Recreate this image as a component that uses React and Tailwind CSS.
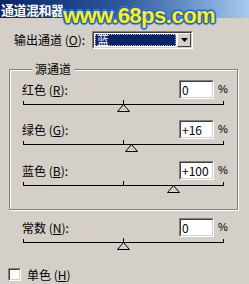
import React from "react";

const font = { fontFamily: '"Noto Sans CJK SC", "Noto Sans", sans-serif' };

function Sunken({ value, className = "" }) {
  return (
    <div className={"border border-t-[#808080] border-l-[#808080] border-b-white border-r-white " + className}>
      <div className="border border-t-[#404040] border-l-[#404040] border-b-[#d4d0c8] border-r-[#d4d0c8] bg-white h-full flex items-center pl-[1px] text-[12px] leading-none text-black">
        {value}
      </div>
    </div>
  );
}

function Slider({ pos }) {
  return (
    <div className="relative h-[9px] w-[201px]">
      <div className="absolute left-0 right-0 top-[3px] h-px bg-black" />
      <div className="absolute left-0 top-0 h-[4px] w-px bg-black" />
      <div className="absolute right-0 top-0 h-[4px] w-px bg-black" />
      <div className="absolute left-[100px] top-[-1px] h-[5px] w-px bg-black" />
      <svg className="absolute top-[3px]" style={{ left: pos - 6 }} width="13" height="8" viewBox="0 0 13 8">
        <polygon points="6.5,0.5 0.5,7.5 12.5,7.5" fill="#d4d0c8" stroke="#000" strokeWidth="1" />
      </svg>
    </div>
  );
}

function Row({ label, letter, value, pos, mt }) {
  return (
    <div className={mt}>
      <div className="flex items-center h-[19px]">
        <span className="w-[157px] text-[12px] leading-none pt-[1px]">
          {label} (<u>{letter}</u>):
        </span>
        <Sunken value={value} className="w-[35px] h-[19px]" />
        <span className="ml-[4px] text-[11px] leading-none" style={{ fontFamily: '"Liberation Sans", sans-serif' }}>%</span>
      </div>
      <div className="mt-[2px] ml-[1px]">
        <Slider pos={pos} />
      </div>
    </div>
  );
}

export default function App() {
  return (
    <div className="relative w-[249px] h-[284px] bg-[#d4d0c8] overflow-hidden text-black" style={font}>
      <div className="h-[18px] bg-gradient-to-r from-[#0a246a] via-[#2d5a9c] to-[#a6caf0] flex items-center pl-[1px]">
        <span className="text-white font-bold text-[13px] leading-none tracking-[-0.5px]">通道混和器</span>
      </div>

      <div className="flex items-center mt-[13px] ml-[14px] h-[18px]">
        <span className="w-[78px] text-[12px] leading-none">
          输出通道 (<u>O</u>):
        </span>
        <div className="w-[101px] h-[18px] border border-t-[#808080] border-l-[#808080] border-b-white border-r-white">
          <div className="h-full flex border border-t-[#404040] border-l-[#404040] border-b-[#d4d0c8] border-r-[#d4d0c8] bg-white">
            <div className="flex-1 m-[1px] bg-[#0a246a] border border-dotted border-[#c0c0c0] flex items-center pl-[1px]">
              <span className="text-white text-[12px] leading-none">蓝</span>
            </div>
            <div className="w-[14px] h-full bg-[#d4d0c8] border border-t-white border-l-white border-b-[#404040] border-r-[#404040] flex items-center justify-center">
              <svg width="7" height="4" viewBox="0 0 7 4"><polygon points="0,0 7,0 3.5,4" fill="#000" /></svg>
            </div>
          </div>
        </div>
      </div>

      <fieldset className="ml-[9px] mt-[14px] w-[229px] h-[147px] border border-[#808080] shadow-[inset_1px_1px_0_#fff,1px_1px_0_#fff] pl-[12px]">
        <legend className="ml-[10px] px-[3px] text-[12px] leading-none bg-[#d4d0c8]">源通道</legend>
        <Row label="红色" letter="R" value="0" pos={100} mt="mt-[5px]" />
        <Row label="绿色" letter="G" value="+16" pos={108} mt="mt-[10px]" />
        <Row label="蓝色" letter="B" value="+100" pos={150} mt="mt-[11px]" />
      </fieldset>

      <div className="ml-[22px] mt-[8px]">
        <Row label="常数" letter="N" value="0" pos={100} mt="mt-0" />
      </div>

      <div className="flex items-center ml-[8px] mt-[20px]">
        <div className="w-[13px] h-[13px] border border-t-[#808080] border-l-[#808080] border-b-white border-r-white">
          <div className="w-full h-full border border-t-[#404040] border-l-[#404040] border-b-[#d4d0c8] border-r-[#d4d0c8] bg-white" />
        </div>
        <span className="ml-[6px] text-[12px] leading-none">
          单色 (<u>H</u>)
        </span>
      </div>

      <div
        className="absolute left-[63px] top-[5px] text-[22px] font-bold text-[#fff200] tracking-[-0.5px] leading-none"
        style={{
          fontFamily: '"Liberation Sans", Arial, sans-serif',
          textShadow:
            "1px 0 0 #1e5fd8, -1px 0 0 #1e5fd8, 0 1px 0 #1e5fd8, 0 -1px 0 #1e5fd8, 1px 1px 0 #1e5fd8, -1px -1px 0 #1e5fd8, 1px -1px 0 #1e5fd8, -1px 1px 0 #1e5fd8, 2px 0 1px #3b82f6, -2px 0 1px #3b82f6, 0 2px 1px #3b82f6, 0 -2px 1px #3b82f6",
        }}
      >
        www.68ps.com
      </div>
    </div>
  );
}
